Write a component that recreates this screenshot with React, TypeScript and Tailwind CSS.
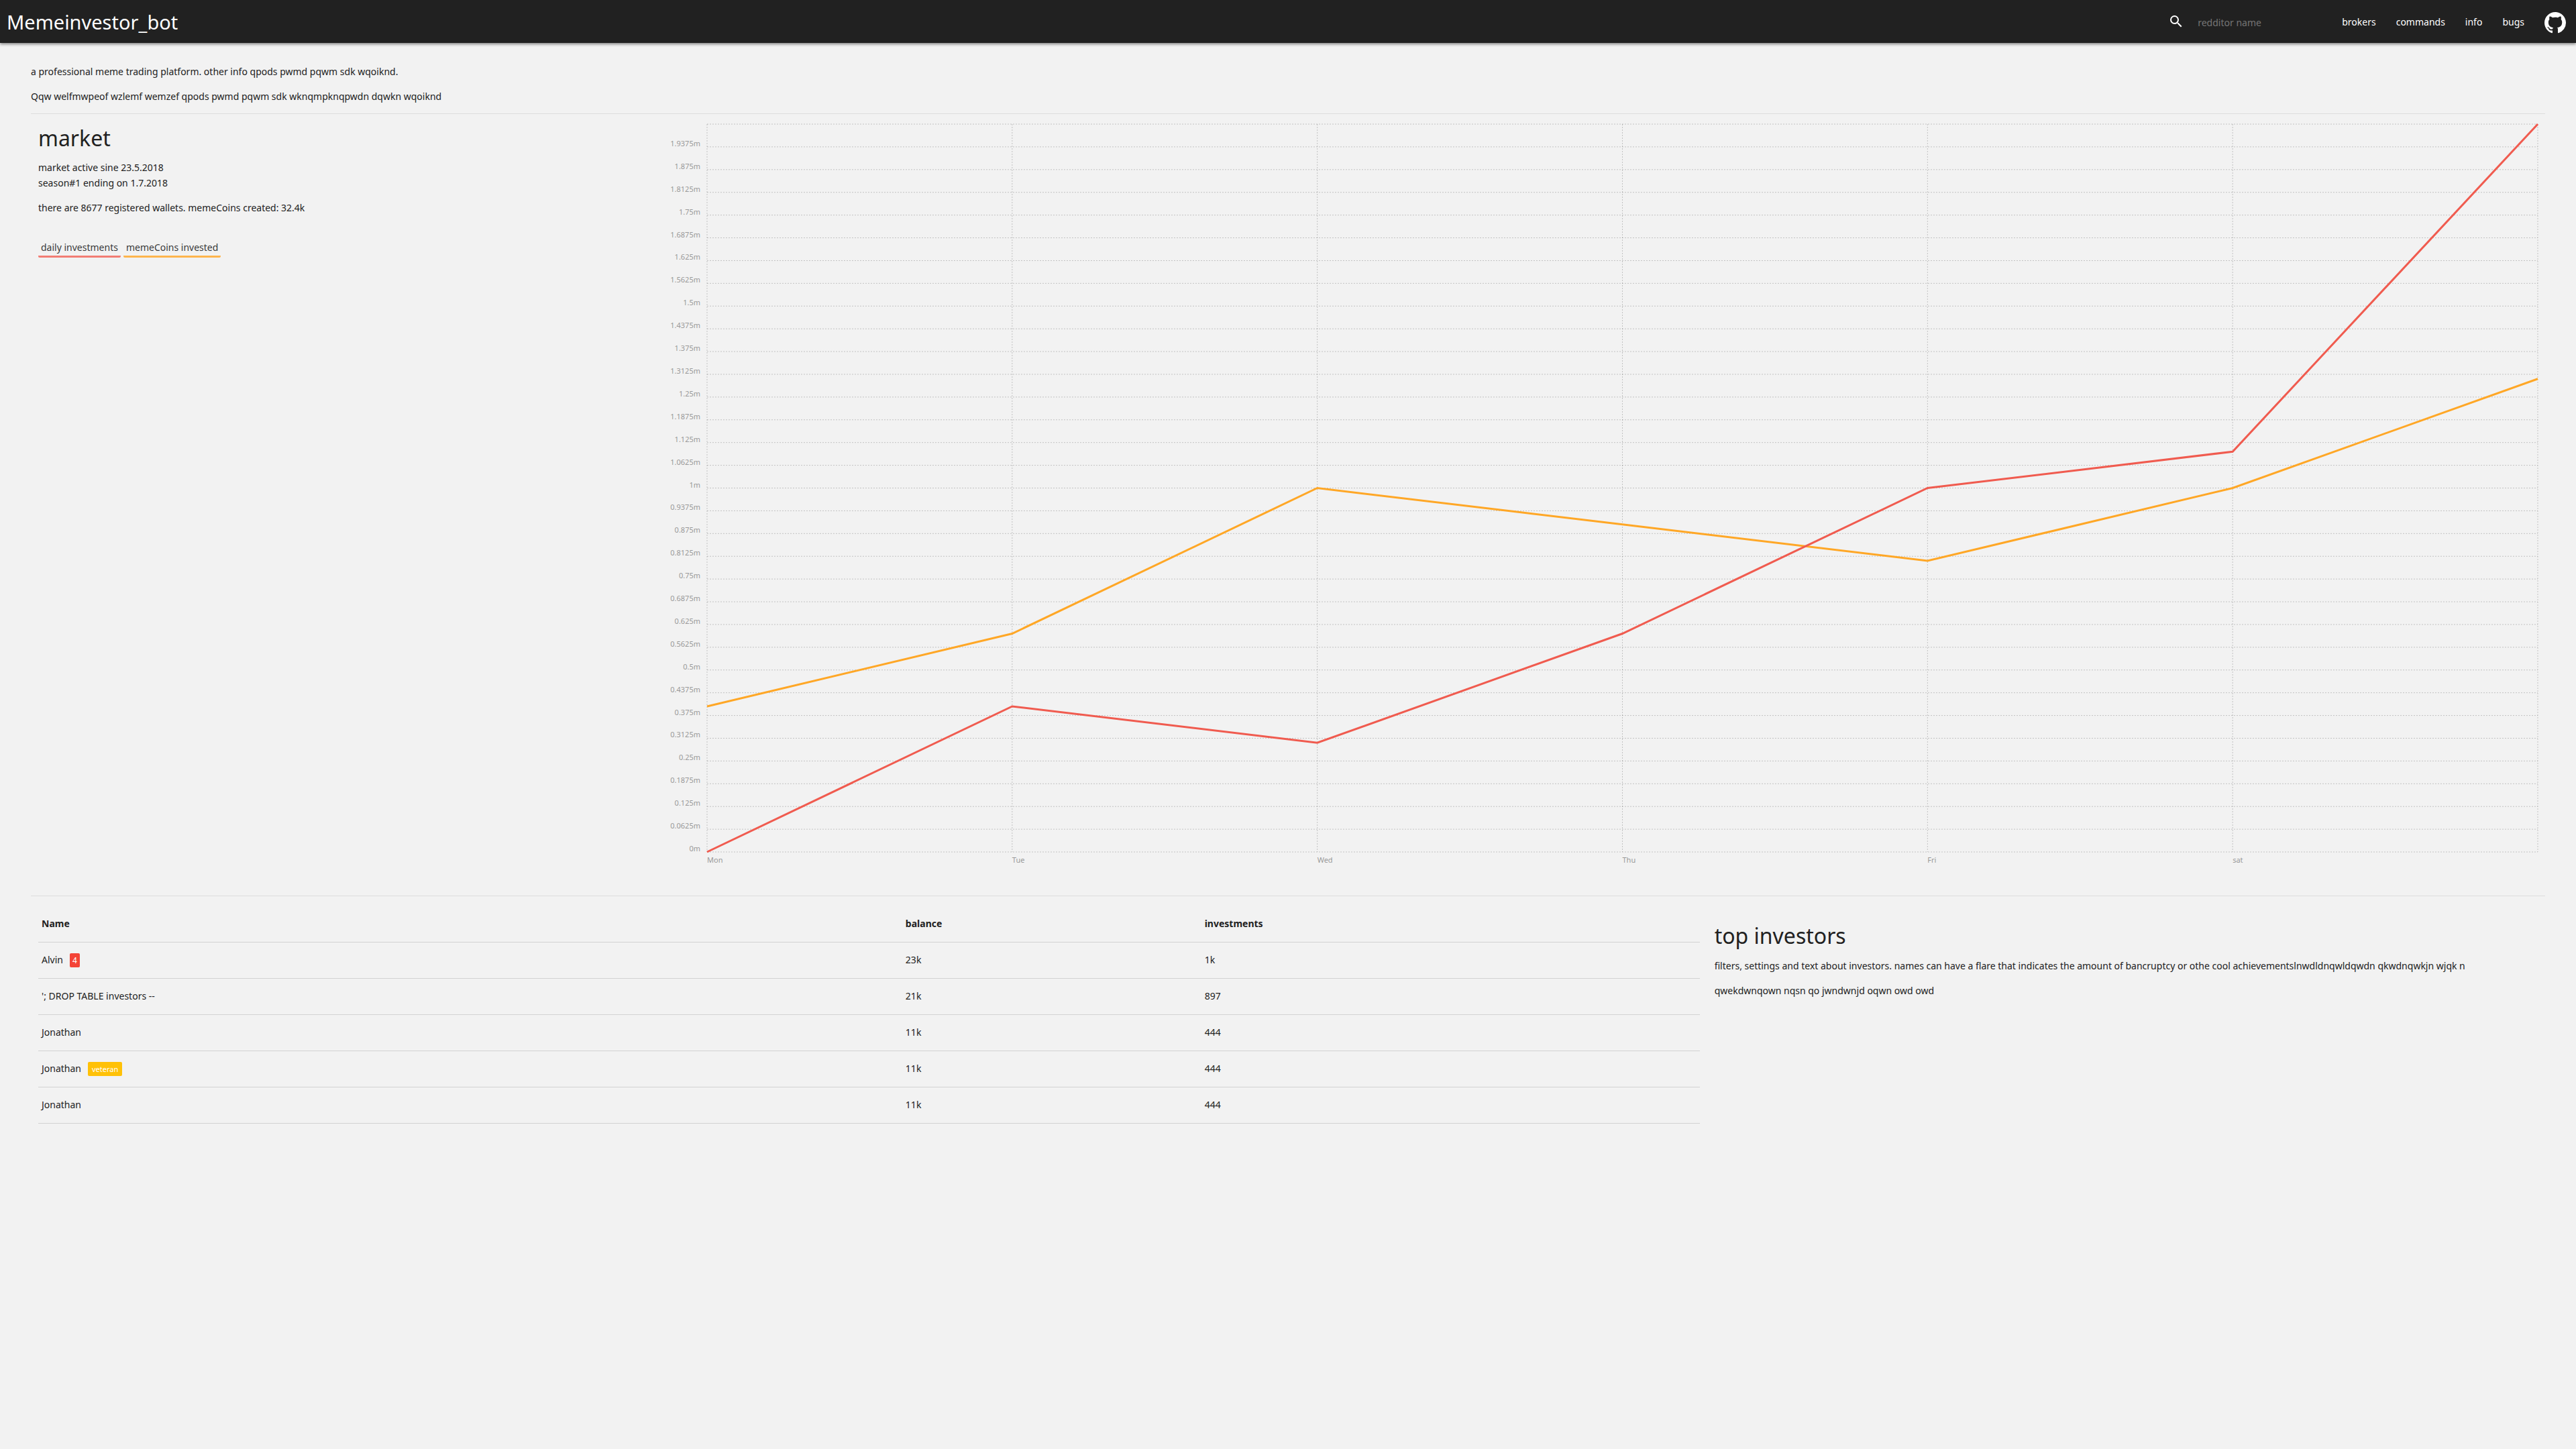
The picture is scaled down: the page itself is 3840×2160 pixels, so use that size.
import React from "react";

const days = ["Mon", "Tue", "Wed", "Thu", "Fri", "sat"];
const steps = 32;
const maxValue = 2;
const dailyInvestments = [0, 0.4, 0.3, 0.6, 1, 1.1, 2];
const coinsInvested = [0.4, 0.6, 1, 0.9, 0.8, 1, 1.3];

const axisLabels = Array.from(
  { length: steps },
  (_, i) => `${((steps - 1 - i) * maxValue) / steps}m`,
);

const investors = [
  { name: "Alvin", flair: "4", tone: "red", balance: "23k", investments: "1k" },
  { name: "'; DROP TABLE investors --", balance: "21k", investments: "897" },
  { name: "Jonathan", balance: "11k", investments: "444" },
  { name: "Jonathan", flair: "veteran", tone: "amber", balance: "11k", investments: "444" },
  { name: "Jonathan", balance: "11k", investments: "444" },
];

function toPoints(values: number[]) {
  return values.map((v, i) => `${i * 100},${(maxValue - v) * 500}`).join(" ");
}

function NavBar() {
  return (
    <header className="relative flex h-16 items-center justify-between bg-[#212121] pl-[10px] text-white shadow-[0_2px_4px_rgba(0,0,0,0.45)]">
      <a href="#" className="pt-[2px] text-[29px] leading-[62px]">
        Memeinvestor_bot
      </a>
      <nav className="flex h-full items-center">
        <form role="search" className="flex items-center" onSubmit={(e) => e.preventDefault()}>
          <label htmlFor="redditor" aria-label="redditor name" className="mr-5">
            <svg viewBox="0 0 24 24" className="size-6 fill-white">
              <path d="M15.5 14h-.79l-.28-.27A6.471 6.471 0 0 0 16 9.5 6.5 6.5 0 1 0 9.5 16c1.61 0 3.09-.59 4.23-1.57l.27.28v.79l5 4.99L20.49 19l-4.99-5zm-6 0C7.01 14 5 11.99 5 9.5S7.01 5 9.5 5 14 7.01 14 9.5 11.99 14 9.5 14z" />
            </svg>
          </label>
          <input
            id="redditor"
            type="text"
            placeholder="redditor name"
            className="h-8 w-[200px] bg-transparent pt-[2px] text-sm text-white outline-none placeholder:text-[#757575]"
          />
        </form>
        <a href="#brokers" className="px-[15px] pt-[2px] text-sm">brokers</a>
        <a href="#commands" className="px-[15px] pt-[2px] text-sm">commands</a>
        <a href="#info" className="px-[15px] pt-[2px] text-sm">info</a>
        <a href="#bugs" className="px-[15px] pt-[2px] text-sm">bugs</a>
        <a href="#github" aria-label="GitHub" className="px-[15px] pt-[4px]">
          <svg viewBox="0 0 16 16" className="size-8 fill-white">
            <path
              fillRule="evenodd"
              d="M8 0C3.58 0 0 3.58 0 8c0 3.54 2.29 6.53 5.47 7.59.4.07.55-.17.55-.38 0-.19-.01-.82-.01-1.49-2.01.37-2.53-.49-2.69-.94-.09-.23-.48-.94-.82-1.13-.28-.15-.68-.52-.01-.53.63-.01 1.08.58 1.23.82.72 1.21 1.87.87 2.33.66.07-.52.28-.87.51-1.07-1.78-.2-3.64-.89-3.64-3.95 0-.87.31-1.59.82-2.15-.08-.2-.36-1.02.08-2.12 0 0 .67-.21 2.2.82.64-.18 1.32-.27 2-.27s1.36.09 2 .27c1.53-1.04 2.2-.82 2.2-.82.44 1.1.16 1.92.08 2.12.51.56.82 1.27.82 2.15 0 3.07-1.87 3.75-3.65 3.95.29.25.54.73.54 1.48 0 1.07-.01 1.93-.01 2.2 0 .21.15.46.55.38A8.01 8.01 0 0 0 16 8c0-4.42-3.58-8-8-8z"
            />
          </svg>
        </a>
      </nav>
    </header>
  );
}

function Chart() {
  return (
    <div className="grid grid-cols-[60px_1fr]">
      <div className="flex h-[1085px] flex-col pr-[10px]">
        {axisLabels.map((label) => (
          <div key={label} className="flex flex-1 items-end justify-end text-[11px] leading-[10px] text-[#999999]">
            {label}
          </div>
        ))}
      </div>
      <svg
        viewBox="0 0 600 1000"
        preserveAspectRatio="none"
        className="h-[1085px] w-full overflow-visible"
        fill="none"
      >
        <g stroke="#000000" strokeOpacity="0.2" strokeWidth="1" strokeDasharray="2">
          {Array.from({ length: steps + 1 }, (_, i) => (
            <line
              key={`h${i}`}
              x1="0"
              x2="600"
              y1={(i * 1000) / steps}
              y2={(i * 1000) / steps}
              vectorEffect="non-scaling-stroke"
            />
          ))}
          {Array.from({ length: 7 }, (_, i) => (
            <line
              key={`v${i}`}
              x1={i * 100}
              x2={i * 100}
              y1="0"
              y2="1000"
              vectorEffect="non-scaling-stroke"
            />
          ))}
        </g>
        <polyline points={toPoints(coinsInvested)} stroke="#ffa726" strokeWidth="3" vectorEffect="non-scaling-stroke" />
        <polyline points={toPoints(dailyInvestments)} stroke="#f05b4f" strokeWidth="3" vectorEffect="non-scaling-stroke" />
      </svg>
      <div className="col-start-2 grid grid-cols-6 pt-1 text-[11px] leading-4 text-[#999999]">
        {days.map((day) => (
          <span key={day}>{day}</span>
        ))}
      </div>
    </div>
  );
}

function Market() {
  return (
    <section className="grid grid-cols-4 border-t border-[#dddddd] pb-[45px]">
      <div className="px-[11px] pt-[15px]">
        <h2 className="text-[32px] leading-[42px]">market</h2>
        <p className="mt-[11px] leading-[23px]">
          market active sine 23.5.2018
          <br />
          season#1 ending on 1.7.2018
        </p>
        <p className="mt-[14px] leading-[23px]">
          there are 8677 registered wallets. memeCoins created: 32.4k
        </p>
        <div className="mt-[36px] flex gap-1">
          <button className="rounded-[2px] border-b-[3px] border-[#f27d74] px-1 leading-[24px] text-[#3a3a3a]">
            daily investments
          </button>
          <button className="rounded-[2px] border-b-[3px] border-[#fdb54d] px-1 leading-[24px] text-[#3a3a3a]">
            memeCoins invested
          </button>
        </div>
      </div>
      <div className="col-span-3 px-[11px] pt-[15px]">
        <Chart />
      </div>
    </section>
  );
}

function Flair({ tone, children }: { tone?: string; children: React.ReactNode }) {
  return tone === "red" ? (
    <span className="ml-[10px] rounded-[2px] bg-[#f44336] px-1 text-xs leading-[21px] text-white">{children}</span>
  ) : (
    <span className="ml-[10px] rounded-[2px] bg-[#ffc107] px-[6px] text-[11px] leading-[21px] text-white">{children}</span>
  );
}

function Investors() {
  return (
    <section className="grid grid-cols-3 border-t border-[#dddddd]">
      <div className="col-span-2 px-[11px] pt-[14px]">
        <table className="w-full table-fixed border-collapse text-left">
          <colgroup>
            <col className="w-[52%]" />
            <col className="w-[18%]" />
            <col className="w-[30%]" />
          </colgroup>
          <thead>
            <tr className="h-[54px] border-b border-[#d2d2d2]">
              <th className="px-[5px] font-bold">Name</th>
              <th className="px-[5px] font-bold">balance</th>
              <th className="px-[5px] font-bold">investments</th>
            </tr>
          </thead>
          <tbody>
            {investors.map((row, i) => (
              <tr key={i} className="h-[54px] border-b border-[#d2d2d2]">
                <td className="px-[5px]">
                  <div className="flex items-center">
                    {row.name}
                    {row.flair && <Flair tone={row.tone}>{row.flair}</Flair>}
                  </div>
                </td>
                <td className="px-[5px]">{row.balance}</td>
                <td className="px-[5px]">{row.investments}</td>
              </tr>
            ))}
          </tbody>
        </table>
      </div>
      <div className="px-[11px] pt-[38px]">
        <h2 className="text-[32px] leading-[42px]">top investors</h2>
        <p className="mt-[12px] leading-[23px]">
          filters, settings and text about investors. names can have a flare that indicates the amount of bancruptcy or
          othe cool achievementslnwdldnqwldqwdn qkwdnqwkjn wjqk n
        </p>
        <p className="mt-[14px] leading-[23px]">qwekdwnqown nqsn qo jwndwnjd oqwn owd owd</p>
      </div>
    </section>
  );
}

export default function App() {
  return (
    <div className="min-h-screen bg-[#f2f2f2] font-['Noto_Sans',sans-serif] text-sm text-[#212121]">
      <NavBar />
      <main className="px-[46px] pt-[31px]">
        <p className="leading-[23px]">a professional meme trading platform. other info qpods pwmd pqwm sdk wqoiknd.</p>
        <p className="mt-[14px] mb-[14px] leading-[23px]">
          Qqw welfmwpeof wzlemf wemzef qpods pwmd pqwm sdk wknqmpknqpwdn dqwkn wqoiknd
        </p>
        <Market />
        <Investors />
      </main>
    </div>
  );
}
